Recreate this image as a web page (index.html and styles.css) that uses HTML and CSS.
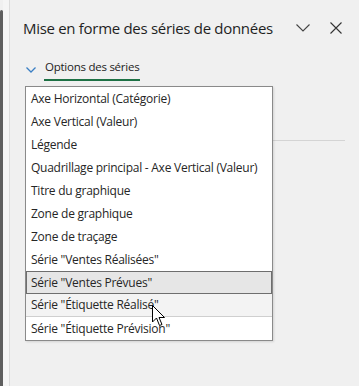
FILE: index.html
```html
<!DOCTYPE html>
<html lang="fr">
<head>
<meta charset="utf-8">
<link rel="stylesheet" href="styles.css">
</head>
<body>
<div class="app">
  <div class="edge"><div class="thumb"></div><div class="gap"></div><div class="rule"></div></div>
  <div class="panel">
    <div class="header">
      <div class="title">Mise en forme des séries de données</div>
      <div class="actions">
        <svg class="ico" width="14" height="8" viewBox="0 0 14 8"><path d="M0.5 0.5 L7 7 L13.5 0.5" fill="none" stroke="#444" stroke-width="1.1"/></svg>
        <svg class="ico" width="12" height="12" viewBox="0 0 12 12"><path d="M0.5 0.5 L11.5 11.5 M11.5 0.5 L0.5 11.5" fill="none" stroke="#333" stroke-width="1.1"/></svg>
      </div>
    </div>
    <div class="tabs">
      <svg class="tabchev" width="10" height="6" viewBox="0 0 10 6"><path d="M0.5 0.5 L5 5 L9.5 0.5" fill="none" stroke="#3b7fc4" stroke-width="1.3"/></svg>
      <div class="tab">Options des séries</div>
    </div>
    <div class="body">
      <div class="divider"></div>
      <ul class="list">
        <li class="item">Axe Horizontal (Catégorie)</li>
        <li class="item">Axe Vertical (Valeur)</li>
        <li class="item">Légende</li>
        <li class="item">Quadrillage principal - Axe Vertical (Valeur)</li>
        <li class="item">Titre du graphique</li>
        <li class="item">Zone de graphique</li>
        <li class="item">Zone de traçage</li>
        <li class="item">Série "Ventes Réalisées"</li>
        <li class="item selected">Série "Ventes Prévues"</li>
        <li class="item hover">Série "Étiquette Réalisé"</li>
        <li class="item">Série "Étiquette Prévision"</li>
      </ul>
      <svg class="cursor" width="14" height="22" viewBox="0 0 14 22"><path d="M0.5 0.5 L0.5 17 L4.5 13 L7.5 20.5 L10 19.5 L7 12.5 L12.5 12.5 Z" fill="#fff" stroke="#000" stroke-width="1" stroke-linejoin="miter"/></svg>
    </div>
  </div>
</div>
</body>
</html>
```
FILE: styles.css
```css
html, body {
  margin: 0;
  padding: 0;
  background: #f0f0f0;
}
.app {
  display: flex;
  width: 359px;
  height: 386px;
  overflow: hidden;
  font-family: "Open Sans", "Liberation Sans", sans-serif;
  color: #262626;
}
.edge {
  display: flex;
  height: 100%;
}
.thumb {
  width: 3px;
  margin-top: 10px;
  background: #5e5e5e;
  border-radius: 2px 2px 0 0;
}
.gap {
  width: 6px;
  background: #f5f5f5;
}
.rule {
  width: 1px;
  background: #dcdcdc;
}
.panel {
  flex: 1;
  display: flex;
  flex-direction: column;
  padding-left: 13px;
}
.header {
  display: flex;
  align-items: center;
  height: 30px;
  margin-top: 13px;
}
.title {
  font-size: 15px;
  letter-spacing: -0.3px;
  color: #1f1f1f;
  white-space: nowrap;
}
.actions {
  display: flex;
  align-items: center;
  gap: 20px;
  margin-left: 23px;
}
.tabs {
  display: flex;
  align-items: center;
  height: 24px;
  margin-top: 14px;
  padding-left: 3px;
}
.tabchev {
  margin-right: 8px;
  margin-top: 2px;
}
.tab {
  font-size: 11.5px;
  letter-spacing: -0.25px;
  color: #222;
  height: 24px;
  line-height: 19px;
  box-sizing: border-box;
  border-bottom: 2px solid #1e7145;
  padding: 0 1px;
}
.body {
  position: relative;
  flex: 1;
}
.divider {
  height: 1px;
  background: #d4d4d4;
  margin: 59px 14px 0 2px;
}
.list {
  position: absolute;
  left: 2px;
  top: 5px;
  width: 246px;
  margin: 0;
  padding: 0;
  list-style: none;
  background: #fff;
  border: 1px solid #8a8a8a;
  box-shadow: 1px 1px 2px rgba(0,0,0,0.12);
}
.item {
  height: 23px;
  line-height: 23px;
  padding-left: 5px;
  font-size: 12px;
  letter-spacing: -0.25px;
  color: #262626;
  white-space: nowrap;
  box-sizing: border-box;
}
.item.selected {
  background: #e6e6e6;
  border: 1px solid #6e6e6e;
  line-height: 21px;
  padding-left: 4px;
}
.item.hover {
  background: #f3f3f3;
  border-bottom: 1px solid #cfcfcf;
  line-height: 22px;
}
.cursor {
  position: absolute;
  left: 129px;
  top: 224px;
}
```
